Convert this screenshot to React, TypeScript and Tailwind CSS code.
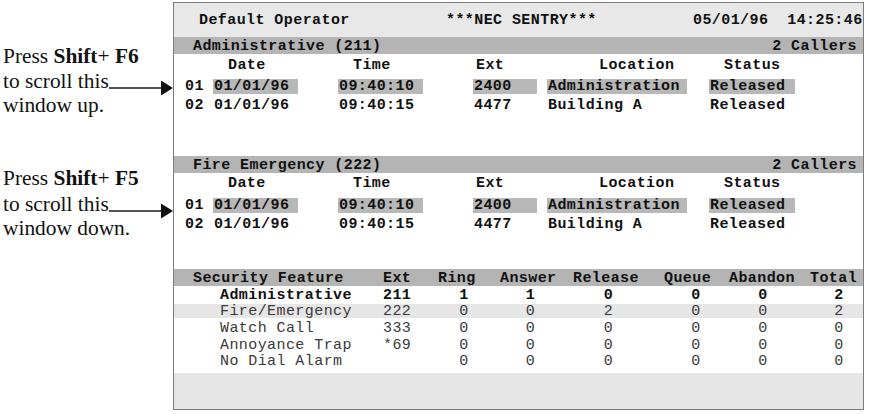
import React from "react";

const MONO = "font-['Liberation_Mono','Courier_New',monospace]";

function Arrow() {
  return (
    <svg width="65" height="16" viewBox="0 0 65 16" className="ml-auto mt-[11px] shrink-0">
      <line x1="0" y1="8" x2="54" y2="8" stroke="#1a1a1a" strokeWidth="1.3" />
      <polygon points="52,0.5 64,8 52,15.5" fill="#111" />
    </svg>
  );
}

function Note({ fkey, dir, firstLine }: { fkey: string; dir: string; firstLine: string }) {
  return (
    <div className="text-[21.4px] text-[#111]">
      <div className={firstLine}>
        Press <b>Shift</b>+ <b>{fkey}</b>
      </div>
      <div className="flex h-[24.5px] items-start leading-[24.5px]">
        <span className="whitespace-nowrap">to scroll this</span>
        <Arrow />
      </div>
      <div className="leading-[24.5px] whitespace-nowrap">window {dir}.</div>
    </div>
  );
}

function SectionBar({ title, count }: { title: string; count: string }) {
  return (
    <div className="flex h-[17px] items-center justify-between bg-[#b4b4b4] pl-[19px] pr-[6px] pt-[2px] font-bold leading-[15px]">
      <span>{title}</span>
      <span>{count}</span>
    </div>
  );
}

type Call = { n: string; date: string; time: string; ext: string; loc: string; status: string; hot?: boolean };

function Cell({ w, hot, children }: { w: string; hot?: boolean; children: React.ReactNode }) {
  return (
    <div className={`${w} flex h-[15px] items-center pl-[1px] ${hot ? "bg-[#b8b8b8]" : ""}`}>
      <span className="whitespace-pre">{children}</span>
    </div>
  );
}

function CallRow({ c }: { c: Call }) {
  return (
    <div className="flex h-[19px] items-center pl-[11px] font-bold">
      <div className="w-[28px]">{c.n}</div>
      <Cell w="w-[85px]" hot={c.hot}>{c.date}</Cell>
      <div className="w-[40px]" />
      <Cell w="w-[85px]" hot={c.hot}>{c.time}</Cell>
      <div className="w-[50px]" />
      <Cell w="w-[64px]" hot={c.hot}>{c.ext}</Cell>
      <div className="w-[10px]" />
      <Cell w="w-[140px]" hot={c.hot}>{c.loc}</Cell>
      <div className="w-[22px]" />
      <Cell w="w-[86px]" hot={c.hot}>{c.status}</Cell>
    </div>
  );
}

function CallSection({
  title,
  height,
  headGap,
  rowGap,
}: {
  title: string;
  height: string;
  headGap: string;
  rowGap: string;
}) {
  const calls: Call[] = [
    { n: "01", date: "01/01/96", time: "09:40:10", ext: "2400", loc: "Administration", status: "Released", hot: true },
    { n: "02", date: "01/01/96", time: "09:40:15", ext: "4477", loc: "Building A", status: "Released" },
  ];
  return (
    <section className={`${height} shrink-0`}>
      <SectionBar title={title} count="2 Callers" />
      <div className={`${headGap} flex h-[19px] items-center pl-[54px] font-bold`}>
        <div className="w-[125px]">Date</div>
        <div className="w-[123px]">Time</div>
        <div className="w-[123px]">Ext</div>
        <div className="w-[125px]">Location</div>
        <div>Status</div>
      </div>
      <div className={rowGap}>
        {calls.map((c) => (
          <CallRow key={c.n} c={c} />
        ))}
      </div>
    </section>
  );
}

type Stat = { name: string; ext: string; v: string[]; bold?: boolean; shade?: boolean; h: string };

const stats: Stat[] = [
  { name: "Administrative", ext: "211", v: ["1", "1", "0", "0", "0", "2"], bold: true, h: "h-[18px]" },
  { name: "Fire/Emergency", ext: "222", v: ["0", "0", "2", "0", "0", "2"], shade: true, h: "h-[14px]" },
  { name: "Watch Call", ext: "333", v: ["0", "0", "0", "0", "0", "0"], h: "h-[20px]" },
  { name: "Annoyance Trap", ext: "*69", v: ["0", "0", "0", "0", "0", "0"], h: "h-[14px]" },
  { name: "No Dial Alarm", ext: "", v: ["0", "0", "0", "0", "0", "0"], h: "h-[19px]" },
];

const valueCols = ["w-[68px]", "w-[65px]", "w-[91px]", "w-[84px]", "w-[50px]", "ml-[27px] w-[48px]"];

function StatRow({ s }: { s: Stat }) {
  return (
    <div
      className={`${s.h} flex items-center pl-[46px] ${s.shade ? "bg-[#e6e6e6]" : ""} ${
        s.bold ? "font-bold text-[#111]" : "font-normal text-[#3a3a3a]"
      }`}
    >
      <div className="w-[163px] whitespace-pre">{s.name}</div>
      <div className="w-[47px]">{s.ext}</div>
      {s.v.map((x, i) => (
        <div key={i} className={`${valueCols[i]} text-center`}>
          {x}
        </div>
      ))}
    </div>
  );
}

function SecuritySection() {
  return (
    <section className="shrink-0">
      <div className="flex h-[17px] items-center bg-[#b4b4b4] pl-[19px] pt-[2px] font-bold leading-[15px]">
        <div className="w-[190px]">Security Feature</div>
        <div className="w-[55px]">Ext</div>
        <div className="w-[62px]">Ring</div>
        <div className="w-[73px]">Answer</div>
        <div className="w-[91px]">Release</div>
        <div className="w-[65px]">Queue</div>
        <div className="w-[81px]">Abandon</div>
        <div>Total</div>
      </div>
      {stats.map((s) => (
        <StatRow key={s.name} s={s} />
      ))}
      <div className="h-[2px]" />
    </section>
  );
}

export default function App() {
  return (
    <div className="flex h-[414px] w-[874px] overflow-hidden bg-white">
      <aside className="w-[173px] shrink-0 pl-[3px] pt-[44px] font-['Liberation_Serif','Times_New_Roman',serif]">
        <Note fkey="F6" dir="up" firstLine="leading-[24.5px] whitespace-nowrap" />
        <div className="h-[47px]" />
        <Note fkey="F5" dir="down" firstLine="leading-[27px] whitespace-nowrap" />
      </aside>

      <main
        className={`${MONO} mt-[2px] flex h-[408px] w-[691px] shrink-0 flex-col border border-[#7c7c7c] text-[15px] leading-[17px] tracking-[0.42px] text-[#111]`}
      >
        <header className="flex h-[34px] shrink-0 items-center bg-[#e8e8e8] pl-[25px] pt-[1px] font-bold">
          <div className="w-[247px]">Default Operator</div>
          <div className="w-[247px]">***NEC SENTRY***</div>
          <div className="whitespace-pre">05/01/96  14:25:46</div>
        </header>

        <CallSection title="Administrative (211)" height="h-[119px]" headGap="mt-[2px]" rowGap="mt-[2px]" />
        <CallSection title="Fire Emergency (222)" height="h-[113px]" headGap="mt-[1px]" rowGap="mt-[3px]" />
        <SecuritySection />

        <footer className="flex-1 bg-[#e6e6e6]" />
      </main>
    </div>
  );
}
